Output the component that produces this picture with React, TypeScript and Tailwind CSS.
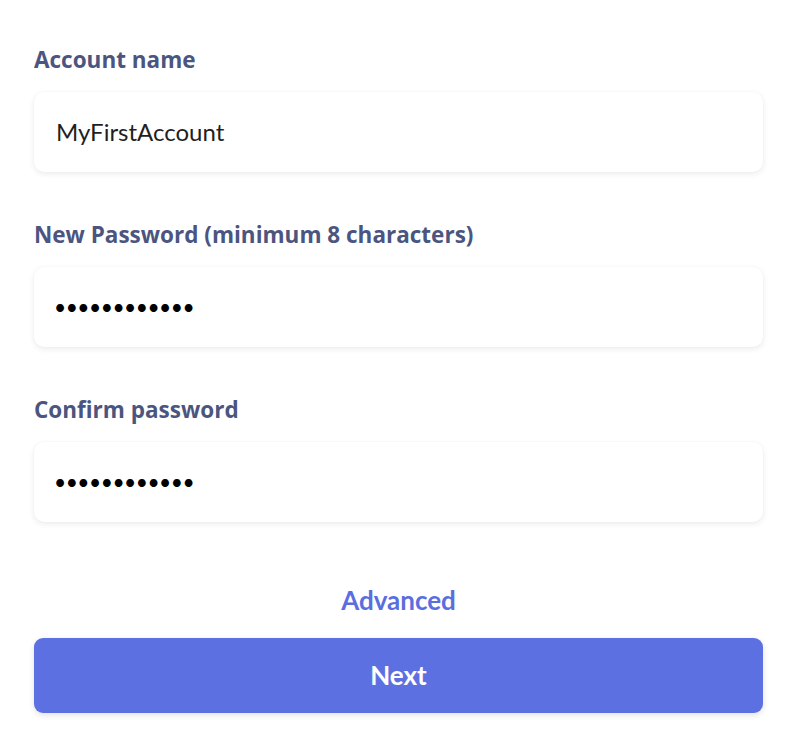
import React from 'react';

const fields = [
    { label: 'Account name', value: 'MyFirstAccount', secret: false },
    { label: 'New Password (minimum 8 characters)', value: '••••••••••••', secret: true },
    { label: 'Confirm password', value: '••••••••••••', secret: true },
];

export default function App() {
    return (
        <div className="w-[794px] h-[746px] bg-white font-['Lato',sans-serif] pl-[34px] pr-[31px] pt-[44px]">
            <div className="flex flex-col gap-[47px]">
                {fields.map((f) => (
                    <div key={f.label}>
                        <label className="block font-['Open_Sans',sans-serif] text-[22.5px] font-bold text-[#4b5580] leading-[32px] mb-[16px]">{f.label}</label>
                        <div className="h-[80px] rounded-[10px] bg-white shadow-[0_2px_6px_rgba(0,0,0,0.08),0_0_2px_rgba(0,0,0,0.04)] flex items-center px-[22px]">
                            {f.secret ? (
                                <span className="text-[21px] text-black tracking-[-0.5px] -ml-[2px]">{f.value}</span>
                            ) : (
                                <span className="text-[24px] text-[#1f1f1f]">{f.value}</span>
                            )}
                        </div>
                    </div>
                ))}
            </div>
            <div className="flex justify-center pt-[64px] pb-[24px]">
                <span className="text-[26px] font-bold text-[#5b6ee0] leading-[28px]">Advanced</span>
            </div>
            <button className="w-full h-[75px] rounded-[9px] bg-[#5d70e1] text-white text-[26px] font-bold shadow-[0_2px_6px_rgba(0,0,0,0.12)]">
                Next
            </button>
        </div>
    );
}
